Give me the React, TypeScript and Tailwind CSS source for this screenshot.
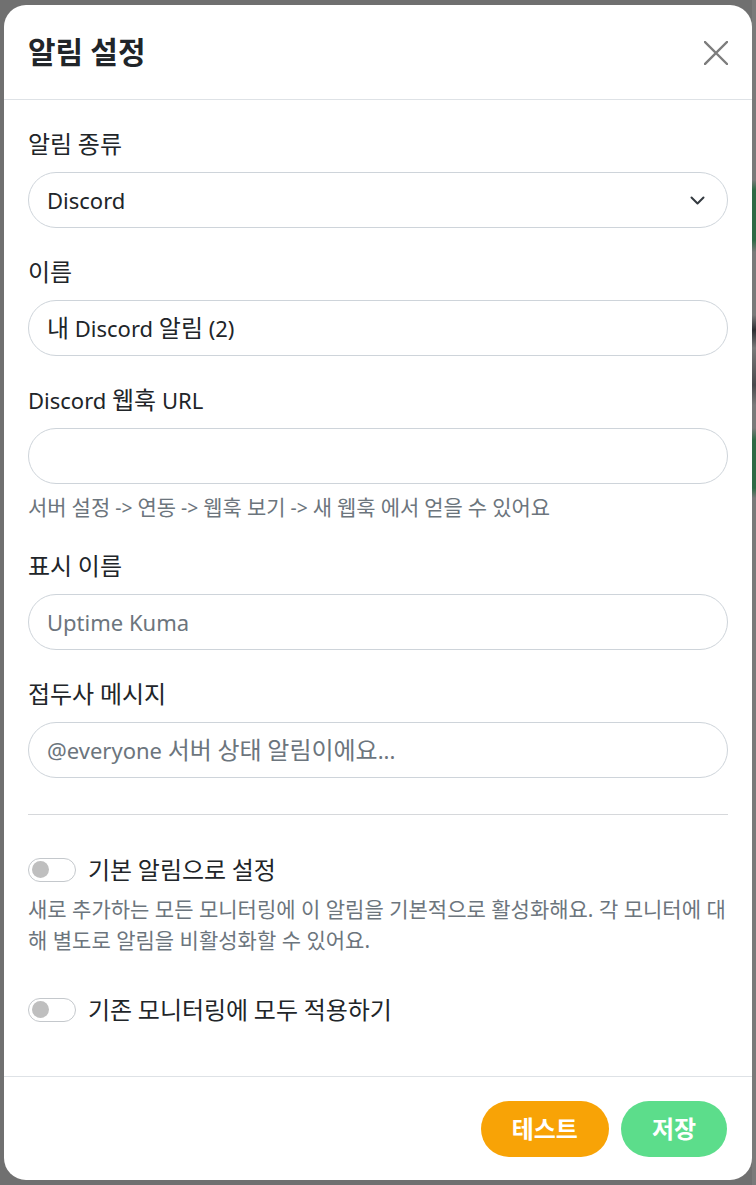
import React from "react";

// Hangul runs get a slightly larger size so they match the wider Korean face in the reference
const ko = (text: string) =>
  text.split(/([가-힣]+)/).map((part, i) =>
    /[가-힣]/.test(part) ? (
      <span key={i} className="text-[1.09em]">
        {part}
      </span>
    ) : (
      part
    )
  );

const Field = ({
  label,
  value,
  placeholder,
  help,
  className = "",
}: {
  label: string;
  value?: string;
  placeholder?: string;
  help?: string;
  className?: string;
}) => (
  <div className={`flex flex-col ${className}`}>
    <label className="h-[33px] leading-[33px] text-[22px] text-[#212529] mb-[12px]">{ko(label)}</label>
    <div className="h-[56px] w-full rounded-full border border-[#ced4da] bg-white px-[18px] flex items-center text-[22px] leading-[33px]">
      {value ? (
        <span className="text-[#212529]">{ko(value)}</span>
      ) : placeholder ? (
        <span className="text-[#6c757d]">{ko(placeholder)}</span>
      ) : null}
    </div>
    {help && <div className="mt-[9px] h-[29px] leading-[29px] text-[19.25px] text-[#6c757d]">{ko(help)}</div>}
  </div>
);

const Toggle = ({ label }: { label: string }) => (
  <div className="flex items-center h-[33px]">
    <div className="w-[48px] h-[24px] rounded-full border border-[#c4c8cc] bg-white flex items-center pl-[3px]">
      <div className="w-[17px] h-[17px] rounded-full bg-[#bfbfbf]" />
    </div>
    <span className="ml-[12px] text-[22px] leading-[33px] text-[#212529]">{ko(label)}</span>
  </div>
);

export default function App() {
  return (
    <div className="w-full h-[1185px] pt-[5px] pb-[5px] pl-[4px] pr-[4px] bg-[#707070] bg-[linear-gradient(to_bottom,#7a7a7a_0px,#7a7a7a_180px,#2f6a45_190px,#2f6a45_240px,#7a7a7a_252px,#7a7a7a_315px,#2e2e32_330px,#7a7a7a_348px,#4a4a4d_385px,#7a7a7a_405px,#7a7a7a_428px,#2f6a45_440px,#2f6a45_488px,#7a7a7a_498px,#7a7a7a_100%)] bg-no-repeat bg-right bg-[length:4px_100%] font-['Noto_Sans','Noto_Sans_CJK_KR',sans-serif]">
      <div className="h-full bg-white rounded-[22px] flex flex-col overflow-hidden">
        {/* header */}
        <div className="h-[95px] border-b border-[#dee2e6] flex items-center justify-between pl-[24px] pr-[24px]">
          <h5 className="text-[27.5px] leading-[41px] font-bold text-[#212529]">{ko("알림 설정")}</h5>
          <svg width="24" height="24" viewBox="0 0 24 24" className="mt-[1px]">
            <path d="M1 1 L23 23 M23 1 L1 23" stroke="#7d7d7d" strokeWidth="2.4" strokeLinecap="square" />
          </svg>
        </div>

        {/* body */}
        <div className="flex-1 flex flex-col pt-[27px] pb-[50px] px-[24px]">
          <div className="flex flex-col">
            <label className="h-[33px] leading-[33px] text-[22px] text-[#212529] mb-[12px]">{ko("알림 종류")}</label>
            <div className="h-[56px] rounded-full border border-[#ced4da] flex items-center justify-between pl-[18px] pr-[21px]">
              <span className="text-[22px] text-[#212529]">Discord</span>
              <svg width="17" height="12" viewBox="0 0 16 12">
                <path d="M2 3.5 L8 9.5 L14 3.5" fill="none" stroke="#343a40" strokeWidth="2" strokeLinecap="round" strokeLinejoin="round" />
              </svg>
            </div>
          </div>

          <Field className="mt-[27px]" label="이름" value="내 Discord 알림 (2)" />
          <Field
            className="mt-[27px]"
            label="Discord 웹훅 URL"
            help="서버 설정 -> 연동 -> 웹훅 보기 -> 새 웹훅 에서 얻을 수 있어요"
          />
          <Field className="mt-[27px]" label="표시 이름" placeholder="Uptime Kuma" />
          <Field className="mt-[27px]" label="접두사 메시지" placeholder="@everyone 서버 상태 알림이에요..." />

          <div className="mt-[36px] h-px bg-[#d6d8db]" />

          <div className="mt-[38px]">
            <Toggle label="기본 알림으로 설정" />
          </div>
          <p className="mt-[8px] h-[62px] text-[21px] leading-[31px] text-[#6c757d] break-all">
            새로 추가하는 모든 모니터링에 이 알림을 기본적으로 활성화해요. 각 모니터에 대해 별도로 알림을 비활성화할 수 있어요.
          </p>
          <div className="mt-[37px]">
            <Toggle label="기존 모니터링에 모두 적용하기" />
          </div>
        </div>

        {/* footer */}
        <div className="border-t border-[#dee2e6] pt-[24px] pb-[23px] pr-[25px] flex justify-end gap-[12px]">
          <button className="h-[56px] px-[31px] rounded-full bg-[#f8a306] text-white text-[22px] font-semibold">{ko("테스트")}</button>
          <button className="h-[56px] px-[31px] rounded-full bg-[#5cdd8b] text-white text-[22px] font-semibold">{ko("저장")}</button>
        </div>
      </div>
    </div>
  );
}
